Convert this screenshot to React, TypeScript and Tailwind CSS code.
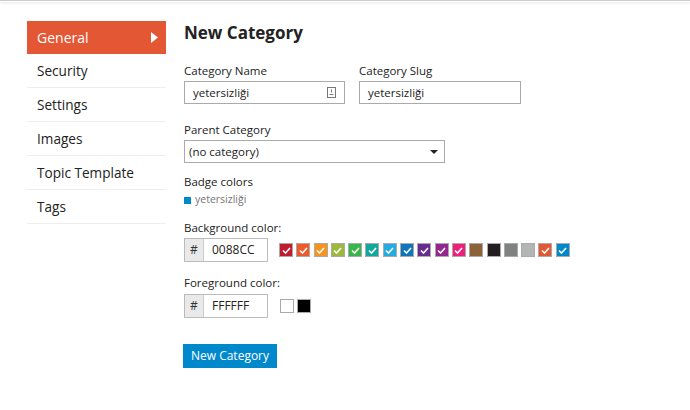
import React from 'react';

const nav = ['General', 'Security', 'Settings', 'Images', 'Topic Template', 'Tags'];

// [colour, checked]
const bgSwatches: [string, boolean][] = [
  ['#BF1E2E', true],
  ['#F1592A', true],
  ['#F7941D', true],
  ['#9EB83B', true],
  ['#3AB54A', true],
  ['#12A89D', true],
  ['#25AAE2', true],
  ['#0E76BD', true],
  ['#652D90', true],
  ['#92278F', true],
  ['#ED207B', true],
  ['#8C6238', false],
  ['#231F20', false],
  ['#808281', false],
  ['#B3B5B4', false],
  ['#E45735', true],
  ['#0088CC', true],
];

function Check() {
  return (
    <svg width="9" height="7" viewBox="0 0 9 7" className="block">
      <path d="M1 3.5 L3.5 6 L8 1" fill="none" stroke="white" strokeWidth="1.6" />
    </svg>
  );
}

function Swatch({ color, checked }: { color: string; checked: boolean }) {
  return (
    <div
      className="flex h-[14px] w-[14px] items-center justify-center border border-[#aaa]"
      style={{ backgroundColor: color }}
    >
      {checked && <Check />}
    </div>
  );
}

function HexInput({ value }: { value: string }) {
  return (
    <div className="flex h-[24px] w-[84px] border border-[#bbb] text-[12px]">
      <div className="flex w-[19px] items-center justify-center border-r border-[#ccc] bg-[#e9e9e9] text-[#333]">#</div>
      <div className="flex items-center bg-white pl-[8px] text-[#222]">{value}</div>
    </div>
  );
}

export default function App() {
  return (
    <div
      className="h-[410px] w-[690px] overflow-hidden bg-white text-[#222]"
      style={{ fontFamily: '"Open Sans", "Noto Sans", sans-serif' }}
    >
      <div className="h-[2px] border-t border-[#ccc] shadow-[0_1px_3px_rgba(0,0,0,0.12)]" />
      <div className="flex pt-[19px]">
        <ul className="ml-[27px] w-[139px] shrink-0">
          {nav.map((item, i) =>
            i === 0 ? (
              <li
                key={item}
                className="flex h-[33px] items-center justify-between bg-[#e45735] pl-[10px] pr-[8px] text-[14px] text-white"
              >
                {item}
                <svg width="7" height="11" viewBox="0 0 7 11">
                  <path d="M0 0 L7 5.5 L0 11 Z" fill="white" />
                </svg>
              </li>
            ) : (
              <li
                key={item}
                className="flex h-[34px] items-center border-b border-[#eee] pl-[10px] pt-[1px] text-[13.6px] text-[#222]"
              >
                {item}
              </li>
            ),
          )}
        </ul>

        <div className="ml-[18px] flex flex-col">
          <h1 className="text-[17px] font-bold leading-[24px] text-[#222]">New Category</h1>

          <div className="mt-[18px] flex gap-[14px] text-[11.5px]">
            <div>
              <div className="leading-[16px]">Category Name</div>
              <div className="mt-[2px] flex h-[23px] w-[161px] items-center justify-between border border-[#aaa] px-[8px]">
                <span>yetersizliği</span>
                <svg width="9" height="11" viewBox="0 0 9 11">
                  <rect x="0.5" y="0.5" width="8" height="10" fill="none" stroke="#777" />
                  <path d="M4.5 2.5 V5.5 M2.5 7.5 H6.5" stroke="#777" />
                </svg>
              </div>
            </div>
            <div>
              <div className="leading-[16px]">Category Slug</div>
              <div className="mt-[2px] flex h-[23px] w-[162px] items-center border border-[#aaa] px-[8px]">
                yetersizliği
              </div>
            </div>
          </div>

          <div className="mt-[18px] text-[11.5px]">
            <div className="leading-[16px]">Parent Category</div>
            <div className="mt-[2px] flex h-[23px] w-[261px] items-center justify-between border border-[#aaa] pl-[4px] pr-[6px]">
              <span>(no category)</span>
              <svg width="8" height="4" viewBox="0 0 8 4">
                <path d="M0 0 H8 L4 4 Z" fill="#222" />
              </svg>
            </div>
          </div>

          <div className="mt-[11px] text-[11.5px] leading-[16px]">Badge colors</div>
          <div className="mt-[3px] flex h-[14px] items-center gap-[4px] text-[10.5px] text-[#777]">
            <span className="h-[7px] w-[7px] bg-[#0088cc]" />
            <span>yetersizliği</span>
          </div>

          <div className="mt-[13px] text-[11.5px] leading-[16px]">Background color:</div>
          <div className="mt-[2px] flex items-center">
            <HexInput value="0088CC" />
            <div className="ml-[11px] flex gap-[3.3px]">
              {bgSwatches.map(([c, chk], i) => (
                <Swatch key={i} color={c} checked={chk} />
              ))}
            </div>
          </div>

          <div className="mt-[13px] text-[11.5px] leading-[16px]">Foreground color:</div>
          <div className="mt-[3px] flex items-center">
            <HexInput value="FFFFFF" />
            <div className="ml-[12px] flex gap-[3px]">
              <Swatch color="#FFFFFF" checked={false} />
              <Swatch color="#000000" checked={false} />
            </div>
          </div>

          <button className="mt-[26px] -ml-[1px] h-[24px] w-[94px] bg-[#0088cc] text-[12px] text-white">
            New Category
          </button>
        </div>
      </div>
    </div>
  );
}
